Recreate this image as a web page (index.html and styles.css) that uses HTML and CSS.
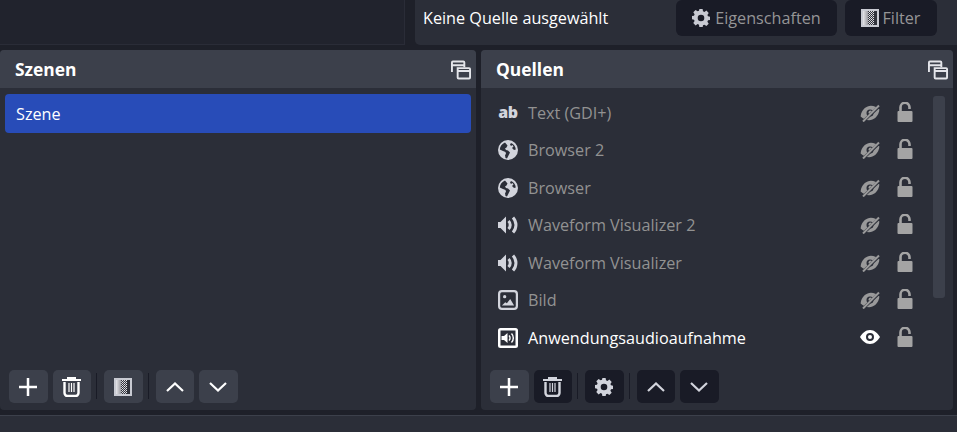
FILE: index.html
```html
<!DOCTYPE html>
<html lang="de">
<head>
    <meta charset="UTF-8">
    <title>Szenen und Quellen</title>
    <link rel="stylesheet" href="styles.css">
</head>
<body>

<svg class="defs" width="0" height="0">
    <defs>
        <linearGradient id="fade">
            <stop offset="0" stop-color="#e6e6ea"/>
            <stop offset="1" stop-color="#9a9aa0"/>
        </linearGradient>
        <pattern id="dots" width="2" height="2" patternUnits="userSpaceOnUse">
            <rect width="2" height="2" fill="#33353d"/>
            <rect width="1" height="1" fill="#e6e6ea"/>
            <rect x="1" y="1" width="1" height="1" fill="#c0c0c6"/>
        </pattern>
        <symbol id="i-undock" viewBox="0 0 21 20">
            <path d="M1 12V2a1 1 0 0 1 1-1h11a1 1 0 0 1 1 1v5M1 5h13" fill="none" stroke="currentColor" stroke-width="2"/>
            <path d="M7 8h12a1 1 0 0 1 1 1v9a1 1 0 0 1-1 1H8a1 1 0 0 1-1-1zM7 11h13" fill="none" stroke="currentColor" stroke-width="2"/>
        </symbol>
        <symbol id="i-gear" viewBox="0 0 18 18">
            <path fill-rule="evenodd" d="M7.400 0h3.200l.4 2.300 1.400.6 2-1.300 2.300 2.300-1.300 2 .6 1.400 2.300.4v3.200l-2.300.4-.6 1.400 1.300 2-2.300 2.300-2-1.300-1.400.6-.4 2.300H7.400L7 15.700l-1.400-.6-2 1.300-2.300-2.300 1.300-2-.6-1.400-2.300-.4V7.100L2 6.700l.6-1.400-1.300-2 2.300-2.300 2 1.300L7 1.700zM9 5.700a3.300 3.300 0 1 0 0 6.600 3.300 3.300 0 0 0 0-6.600z" fill="currentColor"/>
        </symbol>
        <symbol id="i-filter" viewBox="0 0 18 18">
            <rect x="1" y="1" width="16" height="16" fill="#33353d" stroke="currentColor" stroke-width="2"/>
            <rect x="2" y="2" width="5" height="14" fill="url(#fade)"/>
            <rect x="7" y="2" width="6" height="14" fill="url(#dots)"/>
        </symbol>
        <symbol id="i-plus" viewBox="0 0 18 18">
            <path d="M9 0v18M0 9h18" fill="none" stroke="currentColor" stroke-width="2.500"/>
        </symbol>
        <symbol id="i-trash" viewBox="0 0 19 20">
            <path d="M0 3h19M6 3V1h7v2" fill="none" stroke="currentColor" stroke-width="2"/>
            <path d="M2.500 5v11A3 3 0 0 0 5.500 19h8a3 3 0 0 0 3-3V5" fill="none" stroke="currentColor" stroke-width="2.400"/>
            <path d="M7 6v9M9.500 6v9M12 6v9" fill="none" stroke="currentColor" stroke-width="1.200"/>
        </symbol>
        <symbol id="i-up" viewBox="0 0 18 10">
            <path d="M1 9l8-7.500L17 9" fill="none" stroke="currentColor" stroke-width="2.200"/>
        </symbol>
        <symbol id="i-down" viewBox="0 0 18 10">
            <path d="M1 1l8 7.500L17 1" fill="none" stroke="currentColor" stroke-width="2.200"/>
        </symbol>
        <symbol id="i-globe" viewBox="0 0 20 20">
            <path fill-rule="evenodd" d="M10 0a10 10 0 1 1 0 20 10 10 0 0 1 0-20zM7 2.500C4 3.800 2 6.500 1.800 9.500L5 11l2.500 1 .5 2-1 1 .5 3 1.500.5 2-4 1-2-2-2-2-.5-1-1.500 1.500-1 1-2zM13 3l-1 1.500 1 1.500 1.500-1 1 1.500-1.500 1.500 2 2 1.800-.5C17.500 6.500 15.800 4 13 3z" fill="currentColor"/>
        </symbol>
        <symbol id="i-audio" viewBox="0 0 20 18">
            <path d="M0 6h2.500L8 0.500v17L2.500 12H0z" fill="currentColor"/>
            <path d="M10.500 5a5.500 5.500 0 0 1 0 8M15 1.500a11 11 0 0 1 0 15" fill="none" stroke="currentColor" stroke-width="3"/>
        </symbol>
        <symbol id="i-image" viewBox="0 0 18 18">
            <rect x="1" y="1" width="16" height="16" rx="2.500" fill="none" stroke="currentColor" stroke-width="2"/>
            <circle cx="6" cy="6" r="1.500" fill="currentColor"/>
            <path d="M3.500 14l3-3 1.500 1 3-4 3.500 6z" fill="currentColor"/>
        </symbol>
        <symbol id="i-capture" viewBox="0 0 20 20">
            <rect width="20" height="20" rx="2.500" fill="currentColor"/>
            <rect x="2.500" y="2.500" width="15" height="15" fill="#2b2e38"/>
            <path d="M3.500 8h2.500l3.500-3v10L6 12H3.500z" fill="currentColor"/>
            <path d="M11 7.500a3.500 3.500 0 0 1 0 5M13.500 5.500a6.500 6.500 0 0 1 0 9" fill="none" stroke="currentColor" stroke-width="1.400"/>
        </symbol>
        <symbol id="i-hidden" viewBox="0 0 20 18">
            <path transform="rotate(-20 10 9)" d="M0 9c2-4 5.500-7 10-7s8 3 10 7c-2 4-5.500 7-10 7S2 13 0 9z" fill="currentColor"/>
            <circle cx="10" cy="9" r="3.500" fill="#2b2e38"/>
            <circle cx="10.500" cy="8.500" r="2" fill="currentColor"/>
            <path d="M2 18.500L18.500 3" stroke="#2b2e38" stroke-width="3"/>
            <path d="M3 17.500L19 1.500" stroke="currentColor" stroke-width="2"/>
        </symbol>
        <symbol id="i-eye" viewBox="0 0 20 14">
            <path fill-rule="evenodd" d="M10 0c4.500 0 8 3.500 10 7-2 3.500-5.500 7-10 7S2 10.500 0 7c2-3.500 5.500-7 10-7zm0 3a4 4 0 1 0 0 8 4 4 0 0 0 0-8zm0 2a2 2 0 1 1 0 4 2 2 0 0 1 0-4z" fill="currentColor"/>
        </symbol>
        <symbol id="i-lock" viewBox="0 0 16 20">
            <path d="M3.500 10V5.300a4.500 4.500 0 0 1 9 0V7" fill="none" stroke="currentColor" stroke-width="2.600"/>
            <path d="M0.500 10a1 1 0 0 1 1-1h13a1 1 0 0 1 1 1v9a1 1 0 0 1-1 1h-13a1 1 0 0 1-1-1z" fill="currentColor"/>
        </symbol>
    </defs>
</svg>

<div class="page">
    <div class="topbar">
        <div class="preview-end"></div>
        <div class="context">
            <span class="context-label">Keine Quelle ausgewählt</span>
            <button class="context-btn btn-props"><svg class="ico-gear"><use href="#i-gear"/></svg>Eigenschaften</button>
            <button class="context-btn btn-filter"><svg class="ico-filter"><use href="#i-filter"/></svg>Filter</button>
        </div>
    </div>

    <div class="docks">
        <!-- Szenen -->
        <section class="dock dock-scenes">
            <header class="dock-title">
                <span>Szenen</span>
                <svg class="undock"><use href="#i-undock"/></svg>
            </header>
            <div class="scene-list">
                <div class="scene selected">Szene</div>
            </div>
            <div class="toolbar">
                <button class="tool"><svg class="t-plus"><use href="#i-plus"/></svg></button>
                <button class="tool"><svg class="t-trash"><use href="#i-trash"/></svg></button>
                <span class="sep"></span>
                <button class="tool"><svg class="t-filter"><use href="#i-filter"/></svg></button>
                <span class="sep"></span>
                <button class="tool"><svg class="t-arrow"><use href="#i-up"/></svg></button>
                <button class="tool"><svg class="t-arrow"><use href="#i-down"/></svg></button>
            </div>
        </section>

        <!-- Quellen -->
        <section class="dock dock-sources">
            <header class="dock-title">
                <span>Quellen</span>
                <svg class="undock"><use href="#i-undock"/></svg>
            </header>
            <div class="source-area">
                <ul class="source-list">
                    <li class="source">
                        <span class="type-text">ab</span>
                        <span class="source-name">Text (GDI+)</span>
                        <svg class="vis"><use href="#i-hidden"/></svg>
                        <svg class="lock"><use href="#i-lock"/></svg>
                    </li>
                    <li class="source">
                        <svg class="type"><use href="#i-globe"/></svg>
                        <span class="source-name">Browser 2</span>
                        <svg class="vis"><use href="#i-hidden"/></svg>
                        <svg class="lock"><use href="#i-lock"/></svg>
                    </li>
                    <li class="source">
                        <svg class="type"><use href="#i-globe"/></svg>
                        <span class="source-name">Browser</span>
                        <svg class="vis"><use href="#i-hidden"/></svg>
                        <svg class="lock"><use href="#i-lock"/></svg>
                    </li>
                    <li class="source">
                        <svg class="type"><use href="#i-audio"/></svg>
                        <span class="source-name">Waveform Visualizer 2</span>
                        <svg class="vis"><use href="#i-hidden"/></svg>
                        <svg class="lock"><use href="#i-lock"/></svg>
                    </li>
                    <li class="source">
                        <svg class="type"><use href="#i-audio"/></svg>
                        <span class="source-name">Waveform Visualizer</span>
                        <svg class="vis"><use href="#i-hidden"/></svg>
                        <svg class="lock"><use href="#i-lock"/></svg>
                    </li>
                    <li class="source">
                        <svg class="type"><use href="#i-image"/></svg>
                        <span class="source-name">Bild</span>
                        <svg class="vis"><use href="#i-hidden"/></svg>
                        <svg class="lock"><use href="#i-lock"/></svg>
                    </li>
                    <li class="source active">
                        <svg class="type"><use href="#i-capture"/></svg>
                        <span class="source-name">Anwendungsaudioaufnahme</span>
                        <svg class="vis"><use href="#i-eye"/></svg>
                        <svg class="lock"><use href="#i-lock"/></svg>
                    </li>
                </ul>
                <div class="scrollbar"><div class="thumb"></div></div>
            </div>
            <div class="toolbar">
                <button class="tool"><svg class="t-plus"><use href="#i-plus"/></svg></button>
                <button class="tool off"><svg class="t-trash"><use href="#i-trash"/></svg></button>
                <span class="sep"></span>
                <button class="tool off"><svg class="t-gear"><use href="#i-gear"/></svg></button>
                <span class="sep"></span>
                <button class="tool off"><svg class="t-arrow"><use href="#i-up"/></svg></button>
                <button class="tool off"><svg class="t-arrow"><use href="#i-down"/></svg></button>
            </div>
        </section>
    </div>

    <div class="statusbar"></div>
</div>

</body>
</html>
```
FILE: styles.css
```css
* {
    box-sizing: border-box;
}
body {
    margin: 0;
    height: 432px;
    overflow: hidden;
    background-color: #1e2029;
    font-family: "Open Sans", "Noto Sans", sans-serif;
    font-size: 16.2px;
    color: #fff;
}
.defs {
    position: absolute;
}
.page {
    height: 432px;
    display: flex;
    flex-direction: column;
}
button {
    font-family: inherit;
    border: none;
    padding: 0;
}

/* top strip */
.topbar {
    height: 45px;
    display: flex;
}
.preview-end {
    width: 405px;
    background-color: #21232d;
    border-right: 1px solid #2a2c37;
    border-bottom: 1px solid #2a2c37;
}
.context {
    margin-left: 10px;
    width: 542px;
    background-color: #2b2e38;
    border-bottom-left-radius: 5px;
    padding: 0 20px 9px 8px;
    display: flex;
    align-items: center;
}
.context-label {
    flex: 1;
}
.context-btn {
    height: 36px;
    background-color: #191b26;
    color: #959596;
    font-size: 16.2px;
    border-radius: 6px;
    display: flex;
    align-items: center;
    justify-content: center;
}
.btn-props {
    width: 161px;
    gap: 5px;
}
.btn-filter {
    width: 92px;
    margin-left: 8px;
    gap: 3px;
}
.ico-gear {
    width: 18px;
    height: 18px;
    color: #c8cad2;
}
.ico-filter {
    width: 18px;
    height: 18px;
    color: #c8cad2;
}

/* docks */
.docks {
    margin-top: 5px;
    height: 360px;
    display: flex;
}
.dock {
    background-color: #2b2e38;
    border-radius: 4px;
    display: flex;
    flex-direction: column;
}
.dock-scenes {
    width: 476px;
}
.dock-sources {
    width: 472px;
    margin-left: 5px;
}
.dock-title {
    height: 38px;
    flex-shrink: 0;
    background-color: #3c404b;
    border-radius: 4px 4px 0 0;
    padding-left: 15px;
    font-weight: 700;
    font-size: 17.4px;
    display: flex;
    align-items: center;
    justify-content: space-between;
}
.undock {
    width: 20px;
    height: 20px;
    color: #e4e5ea;
    margin-right: 5px;
    margin-top: 1px;
}
.scene-list {
    flex: 1;
    padding: 6px 5px 0 5px;
}
.scene {
    height: 39px;
    line-height: 40px;
    padding-left: 11px;
    background-color: #284cb8;
    border-radius: 4px;
}

/* sources */
.source-area {
    flex: 1;
    display: flex;
    padding-top: 6px;
    min-height: 0;
}
.source-list {
    list-style: none;
    margin: 0;
    padding: 0;
    width: 452px;
}
.source {
    height: 37.5px;
    display: flex;
    align-items: center;
    padding-left: 17px;
    color: #929292;
}
.source.active {
    color: #fff;
}
.type, .type-text {
    width: 20px;
    height: 20px;
    color: #d2d4dc;
}
.source.active .type {
    color: #fff;
}
.type-text {
    font-weight: 800;
    font-size: 16px;
    line-height: 19px;
    text-align: center;
    letter-spacing: -0.5px;
}
.source-name {
    flex: 1;
    margin-left: 10px;
}
.vis {
    width: 20px;
    height: 18px;
    color: #99999a;
}
.source.active .vis {
    height: 14px;
    color: #fff;
    margin-top: -1px;
}
.lock {
    width: 16px;
    height: 20px;
    margin-left: 17px;
    margin-right: 20px;
    margin-bottom: 2px;
    color: #a4a4a4;
}
.scrollbar {
    width: 12px;
    padding-top: 2px;
}
.thumb {
    height: 202px;
    background-color: #3c404b;
    border-radius: 3px;
}

/* toolbars */
.toolbar {
    height: 40px;
    flex-shrink: 0;
    padding-left: 9px;
    display: flex;
    align-items: flex-start;
    gap: 5px;
}
.tool {
    width: 38.5px;
    height: 33px;
    background-color: #3c404b;
    border-radius: 5px;
    color: #fff;
    display: flex;
    align-items: center;
    justify-content: center;
}
.tool.off {
    background-color: #191b26;
    color: #d2d4dc;
}
.sep {
    width: 1px;
    height: 26px;
    margin: 3px 2px 0 0;
    background-color: #191b26;
}
.t-plus {
    width: 18px;
    height: 18px;
}
.t-trash {
    width: 19px;
    height: 20px;
}
.t-filter {
    width: 18px;
    height: 18px;
    color: #c8cad2;
}
.t-gear {
    width: 18px;
    height: 18px;
}
.t-arrow {
    width: 18px;
    height: 10px;
}

.statusbar {
    margin-top: 5px;
    flex: 1;
    background-color: #2b2e38;
    border-top: 1px solid #3c404b;
}
```
